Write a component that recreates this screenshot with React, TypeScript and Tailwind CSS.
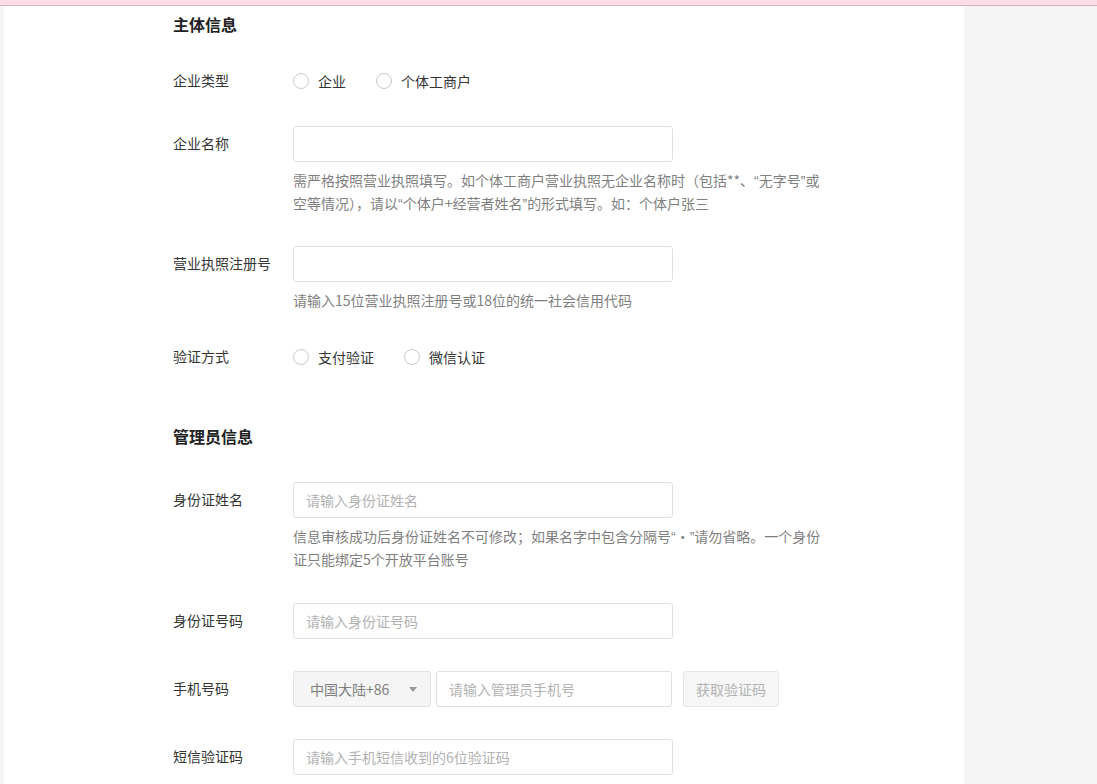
import React from 'react';

const font = { fontFamily: '"Noto Sans CJK SC", "Noto Sans", sans-serif' };

function Radio({ label }: { label: string }) {
  return (
    <label className="flex items-center gap-[9px] cursor-pointer">
      <span className="w-4 h-4 rounded-full border border-[#c9c9c9] bg-white" />
      <span className="text-[14px] text-[#353535]">{label}</span>
    </label>
  );
}

function Field({ label, children, className = '' }: { label: string; children: React.ReactNode; className?: string }) {
  return (
    <div className={`flex ${className}`}>
      <div className="w-[120px] shrink-0 leading-[34px] text-[14px] text-[#353535]">{label}</div>
      <div className="flex-1">{children}</div>
    </div>
  );
}

function TextInput({ placeholder = '', width = 'w-[380px]' }: { placeholder?: string; width?: string }) {
  return (
    <input
      placeholder={placeholder}
      className={`${width} h-9 px-3 rounded-[3px] border border-[#e0e0e0] bg-white text-[14px] text-[#353535] placeholder:text-[#b2b2b2] outline-none`}
    />
  );
}

function Help({ children }: { children: React.ReactNode }) {
  return <p className="mt-[7px] text-[14px] leading-[22px] text-[#7f7f7f]">{children}</p>;
}

// narrow latin quotes, like the original font
function Q({ children }: { children: React.ReactNode }) {
  return <span style={{ fontFamily: '"Liberation Sans", sans-serif' }}>{children}</span>;
}

export default function App() {
  return (
    <div className="min-h-screen bg-[#f5f5f5]" style={font}>
      <div className="h-[5px] bg-[#fddde5] border-b border-[#d8b3bd] box-content" />
      <div className="flex">
        <div className="w-[4px] shrink-0" />
        <div className="w-[960px] bg-white pl-[169px] pt-[6px] pb-10 h-[778px] overflow-hidden">
          <h2 className="text-[16px] leading-[24px] font-bold text-[#222]">主体信息</h2>

          <Field label="企业类型" className="mt-[27px]">
            <div className="h-9 flex items-center gap-[30px]">
              <Radio label="企业" />
              <Radio label="个体工商户" />
            </div>
          </Field>

          <Field label="企业名称" className="mt-[27px]">
            <TextInput />
            <Help>
              需严格按照营业执照填写。如个体工商户营业执照无企业名称时（包括**、<Q>“</Q>无字号<Q>”</Q>或
              <br />
              空等情况），请以<Q>“</Q>个体户+经营者姓名<Q>”</Q>的形式填写。如：个体户张三
            </Help>
          </Field>

          <Field label="营业执照注册号" className="mt-[31px]">
            <TextInput />
            <Help>请输入15位营业执照注册号或18位的统一社会信用代码</Help>
          </Field>

          <Field label="验证方式" className="mt-[28px]">
            <div className="h-9 flex items-center gap-[30px]">
              <Radio label="支付验证" />
              <Radio label="微信认证" />
            </div>
          </Field>

          <h2 className="mt-[49px] text-[16px] leading-[24px] font-bold text-[#222]">管理员信息</h2>

          <Field label="身份证姓名" className="mt-[34px]">
            <TextInput placeholder="请输入身份证姓名" />
            <Help>
              信息审核成功后身份证姓名不可修改；如果名字中包含分隔号<Q>“</Q>·<Q>”</Q>请勿省略。一个身份
              <br />
              证只能绑定5个开放平台账号
            </Help>
          </Field>

          <Field label="身份证号码" className="mt-[33px]">
            <TextInput placeholder="请输入身份证号码" />
          </Field>

          <Field label="手机号码" className="mt-[32px]">
            <div className="flex items-center">
              <div className="w-[138px] h-9 flex items-center justify-between pl-4 pr-3 rounded-[3px] border border-[#e0e0e0] bg-[#f4f5f4] text-[14px] text-[#808080]">
                <span>中国大陆+86</span>
                <svg width="8" height="5" viewBox="0 0 8 5" className="mr-[1px]">
                  <path d="M0 0h8L4 5z" fill="#999" />
                </svg>
              </div>
              <TextInput placeholder="请输入管理员手机号" width="w-[236px] ml-[5px]" />
              <button className="ml-[11px] w-[96px] h-9 rounded-[3px] border border-[#e5e5e5] bg-[#f5f6f5] text-[14px] text-[#b3b3b3]">
                获取验证码
              </button>
            </div>
          </Field>

          <Field label="短信验证码" className="mt-[32px]">
            <TextInput placeholder="请输入手机短信收到的6位验证码" />
          </Field>
        </div>
      </div>
    </div>
  );
}
